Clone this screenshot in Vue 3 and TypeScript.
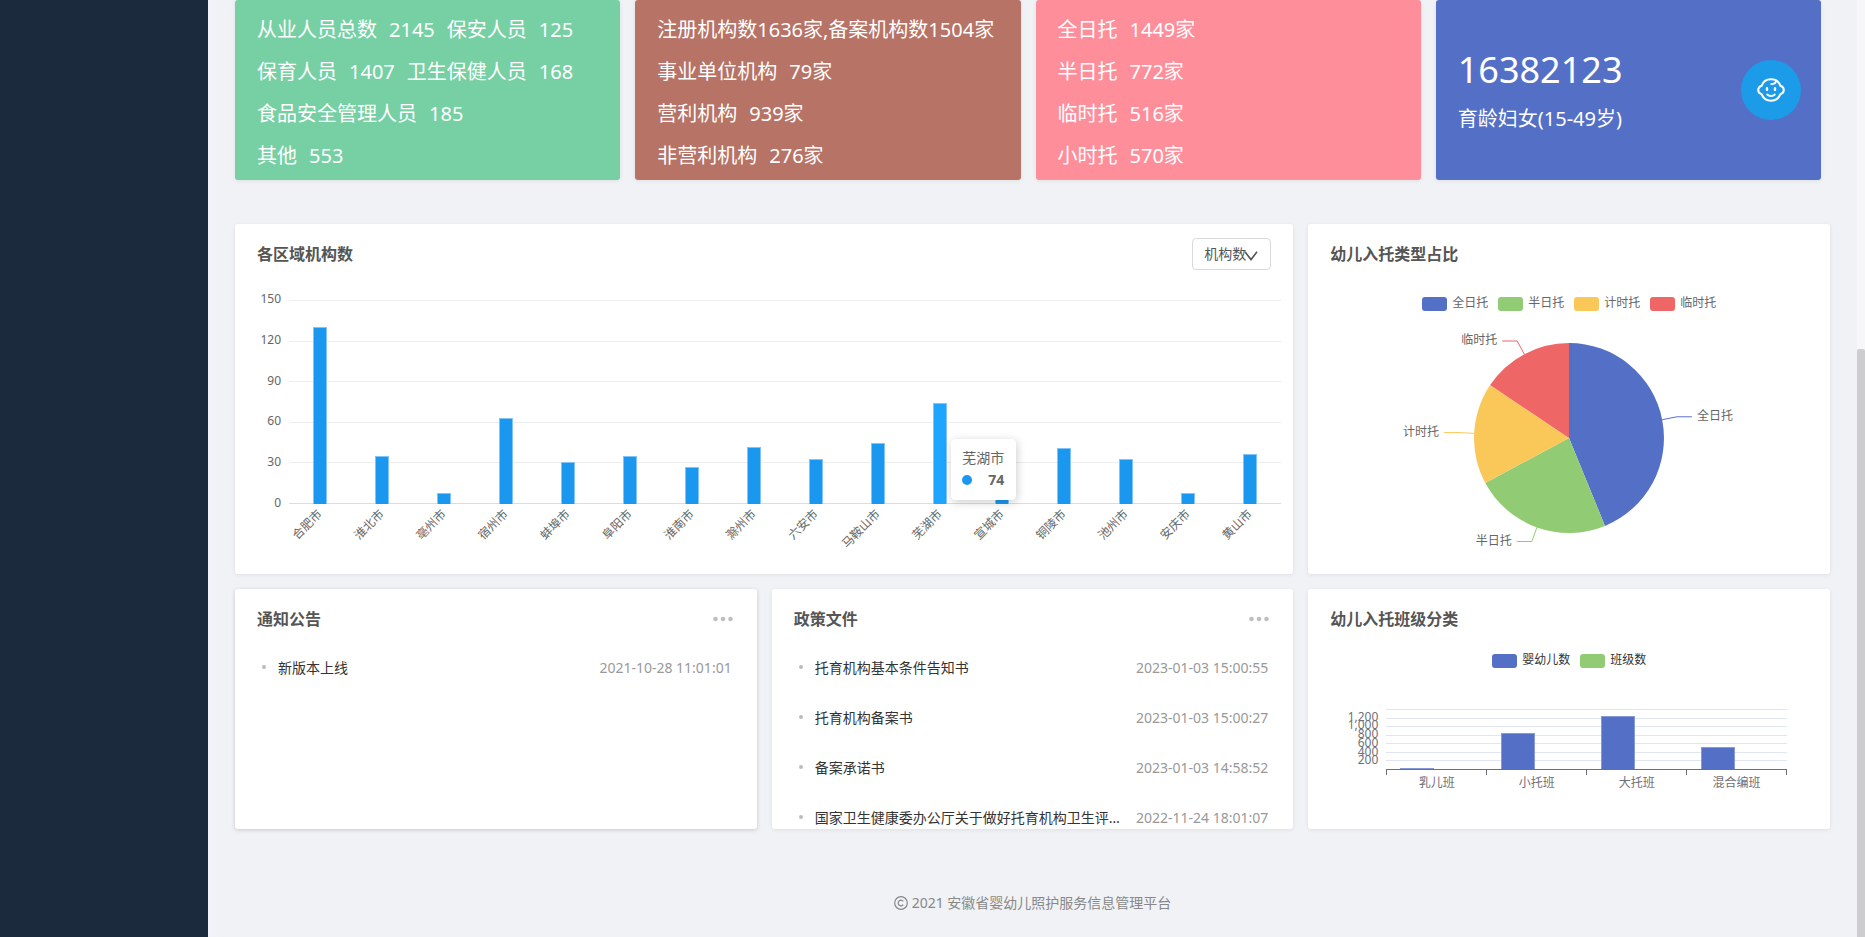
<script setup lang="ts">
import { ref } from 'vue'

interface Stat {
  label: string
  value: string
}

const staffRows: Stat[][] = [
  [
    { label: '从业人员总数', value: '2145' },
    { label: '保安人员', value: '125' },
  ],
  [
    { label: '保育人员', value: '1407' },
    { label: '卫生保健人员', value: '168' },
  ],
  [{ label: '食品安全管理人员', value: '185' }],
  [{ label: '其他', value: '553' }],
]

const orgHeadline = '注册机构数1636家,备案机构数1504家'
const orgRows: Stat[] = [
  { label: '事业单位机构', value: '79家' },
  { label: '营利机构', value: '939家' },
  { label: '非营利机构', value: '276家' },
]

const careRows: Stat[] = [
  { label: '全日托', value: '1449家' },
  { label: '半日托', value: '772家' },
  { label: '临时托', value: '516家' },
  { label: '小时托', value: '570家' },
]

/* Institutions per city */
const metric = ref('机构数')
const cityMax = 150
const cityTicks = [150, 120, 90, 60, 30, 0]
const cities = [
  { name: '合肥市', value: 130 },
  { name: '淮北市', value: 35 },
  { name: '亳州市', value: 8 },
  { name: '宿州市', value: 63 },
  { name: '蚌埠市', value: 31 },
  { name: '阜阳市', value: 35 },
  { name: '淮南市', value: 27 },
  { name: '滁州市', value: 42 },
  { name: '六安市', value: 33 },
  { name: '马鞍山市', value: 45 },
  { name: '芜湖市', value: 74 },
  { name: '宣城市', value: 25 },
  { name: '铜陵市', value: 41 },
  { name: '池州市', value: 33 },
  { name: '安庆市', value: 8 },
  { name: '黄山市', value: 37 },
]
const activeIndex = ref(10)

/* Enrolment types */
const cx = 200
const cy = 120
const radius = 95
const shares = [
  { name: '全日托', value: 1449, color: '#5470c6' },
  { name: '半日托', value: 772, color: '#91cc75' },
  { name: '计时托', value: 570, color: '#fac858' },
  { name: '临时托', value: 516, color: '#ee6666' },
]
const shareTotal = shares.reduce((sum, s) => sum + s.value, 0)

function polar(r: number, turn: number): [number, number] {
  const a = turn * Math.PI * 2
  return [Math.round((cx + r * Math.sin(a)) * 10) / 10, Math.round((cy - r * Math.cos(a)) * 10) / 10]
}

let sweep = 0
const slices = shares.map((s) => {
  const start = sweep / shareTotal
  sweep += s.value
  const end = sweep / shareTotal
  const mid = (start + end) / 2
  const side = mid < 0.5 ? 1 : -1
  const from = polar(radius, start)
  const to = polar(radius, end)
  const edge = polar(radius, mid)
  const bend = polar(radius + 15, mid)
  const tip = bend[0] + side * 15
  return {
    ...s,
    path: `M${cx} ${cy}L${from} A${radius} ${radius} 0 ${end - start > 0.5 ? 1 : 0} 1 ${to}Z`,
    line: `${edge} ${bend} ${tip},${bend[1]}`,
    textX: tip + side * 5,
    textY: bend[1] + 3,
    anchor: side > 0 ? 'start' : 'end',
  }
})

/* Children per class type */
const classMax = 1400
const classTicks = ['', '1,200', '1,000', '800', '600', '400', '200', '']
const classes = [
  { name: '乳儿班', value: 35 },
  { name: '小托班', value: 843 },
  { name: '大托班', value: 1236 },
  { name: '混合编班', value: 523 },
]

interface Notice {
  title: string
  time: string
}
const notices: Notice[] = [{ title: '新版本上线', time: '2021-10-28 11:01:01' }]
const policies: Notice[] = [
  { title: '托育机构基本条件告知书', time: '2023-01-03 15:00:55' },
  { title: '托育机构备案书', time: '2023-01-03 15:00:27' },
  { title: '备案承诺书', time: '2023-01-03 14:58:52' },
  { title: '国家卫生健康委办公厅关于做好托育机构卫生评价工作的通知', time: '2022-11-24 18:01:07' },
]
const boards = [
  { title: '通知公告', items: notices, raised: true },
  { title: '政策文件', items: policies, raised: false },
]
</script>

<template>
  <div class="layout">
    <aside class="sidebar"></aside>

    <main class="content">
      <section class="stats">
        <div class="stat green">
          <p v-for="(row, i) in staffRows" :key="i" class="stat-row">
            <template v-for="s in row" :key="s.label">
              <span>{{ s.label }}</span><span>{{ s.value }}</span>
            </template>
          </p>
        </div>
        <div class="stat brown">
          <p class="stat-row">{{ orgHeadline }}</p>
          <p v-for="s in orgRows" :key="s.label" class="stat-row">
            <span>{{ s.label }}</span><span>{{ s.value }}</span>
          </p>
        </div>
        <div class="stat pink">
          <p v-for="s in careRows" :key="s.label" class="stat-row">
            <span>{{ s.label }}</span><span>{{ s.value }}</span>
          </p>
        </div>
        <div class="stat blue">
          <div class="women">
            <p class="big">16382123</p>
            <p class="caption">育龄妇女(15-49岁)</p>
          </div>
          <span class="badge">
            <svg width="28" height="24" viewBox="0 0 28 24" fill="none" stroke="#fff" stroke-width="2" stroke-linecap="round" stroke-linejoin="round">
              <path d="M14 1.300C9.600 1.300 6 3.800 4.600 7.800C3 8.300 1.200 10.100 1.200 12S3 15.700 4.600 16.200C6 20 9.600 22.700 14 22.700S22 20 23.400 16.200C25 15.700 26.800 13.900 26.800 12S25 8.300 23.400 7.800C22 3.800 18.400 1.300 14 1.300Z" />
              <path d="M14.300 6C17 6 18.600 5 19 3.200" />
              <path d="M10 10.300v1.600M18 10.300v1.600" stroke-width="2.400" />
              <path d="M10.300 16.600C12 18.400 16 18.400 17.700 16.600" />
            </svg>
          </span>
        </div>
      </section>

      <section class="panels">
        <article class="card wide">
          <header class="card-head">
            <h2>各区域机构数</h2>
            <div class="picker">
              <select v-model="metric" aria-label="统计指标">
                <option>机构数</option>
              </select>
              <svg width="14" height="10" viewBox="0 0 14 10" fill="none" stroke="#555" stroke-width="1.600">
                <path d="M1 .8L7 8.600L13 .8" />
              </svg>
            </div>
          </header>

          <div class="city-chart">
            <div class="y-axis">
              <span v-for="t in cityTicks" :key="t">{{ t }}</span>
            </div>
            <div class="plot">
              <div class="grid-lines">
                <i v-for="t in cityTicks" :key="t" :class="{ base: t === 0 }"></i>
              </div>
              <div class="bars">
                <div v-for="(c, i) in cities" :key="c.name" class="slot">
                  <div class="bar" :class="{ active: i === activeIndex }" :style="{ height: (c.value / cityMax) * 100 + '%' }"></div>
                </div>
              </div>
              <div class="tooltip" :style="{ left: ((activeIndex + 0.5) / cities.length) * 100 + '%' }">
                <span>{{ cities[activeIndex].name }}</span>
                <span class="tip-row"><i></i><b>{{ cities[activeIndex].value }}</b></span>
              </div>
            </div>
            <div class="x-axis">
              <div v-for="c in cities" :key="c.name" class="x-slot"><span>{{ c.name }}</span></div>
            </div>
          </div>
        </article>

        <article class="card">
          <header class="card-head"><h2>幼儿入托类型占比</h2></header>
          <ul class="legend pie-legend">
            <li v-for="s in shares" :key="s.name">
              <svg width="25" height="14"><rect width="25" height="14" rx="3" :fill="s.color" /></svg>
              <span>{{ s.name }}</span>
            </li>
          </ul>
          <svg class="pie" width="400" height="240" viewBox="0 0 400 240">
            <g v-for="s in slices" :key="s.name">
              <path :d="s.path" :fill="s.color" />
              <polyline :points="s.line" fill="none" :stroke="s.color" />
              <text :x="s.textX" :y="s.textY" :text-anchor="s.anchor">{{ s.name }}</text>
            </g>
          </svg>
        </article>

        <article v-for="b in boards" :key="b.title" class="card short" :class="{ raised: b.raised }">
          <header class="card-head">
            <h2>{{ b.title }}</h2>
            <button type="button" class="more" aria-label="更多">
              <svg width="24" height="24" viewBox="0 0 24 24" fill="#bfbfbf">
                <circle cx="4.500" cy="12" r="2.300" /><circle cx="12" cy="12" r="2.300" /><circle cx="19.500" cy="12" r="2.300" />
              </svg>
            </button>
          </header>
          <ul class="news">
            <li v-for="n in b.items" :key="n.title">
              <i class="dot"></i>
              <a href="#">{{ n.title }}</a>
              <time>{{ n.time }}</time>
            </li>
          </ul>
        </article>

        <article class="card short">
          <header class="card-head"><h2>幼儿入托班级分类</h2></header>
          <ul class="legend class-legend">
            <li>
              <svg width="25" height="14"><rect width="25" height="14" rx="3" fill="#5470c6" /></svg>
              <span>婴幼儿数</span>
            </li>
            <li>
              <svg width="25" height="14"><rect width="25" height="14" rx="3" fill="#91cc75" /></svg>
              <span>班级数</span>
            </li>
          </ul>
          <div class="class-chart">
            <div class="y-axis">
              <span v-for="(t, i) in classTicks" :key="i">{{ t }}</span>
            </div>
            <div class="plot">
              <div class="grid-lines">
                <i v-for="(t, i) in classTicks" :key="i"></i>
              </div>
              <div class="bars">
                <div v-for="c in classes" :key="c.name" class="slot">
                  <div class="bar" :style="{ height: (c.value / classMax) * 100 + '%' }"></div>
                </div>
              </div>
            </div>
            <div class="x-axis">
              <div v-for="c in classes" :key="c.name" class="x-slot"><span>{{ c.name }}</span></div>
            </div>
          </div>
        </article>
      </section>

      <footer class="footer">
        <svg width="14" height="14" viewBox="0 0 14 14" fill="none" stroke="#888" stroke-width="1.200">
          <circle cx="7" cy="7" r="6.300" />
          <path d="M9.200 5.300A2.800 2.800 0 1 0 9.200 8.700" />
        </svg>
        <span>2021 安徽省婴幼儿照护服务信息管理平台</span>
      </footer>
    </main>

    <div class="scrollbar"><div class="thumb"></div></div>
  </div>
</template>

<style>
body {
  margin: 0;
  background: #f0f2f6;
}
</style>

<style scoped>
.layout {
  display: flex;
  min-height: 100vh;
  font-family: 'Noto Sans', 'Noto Sans CJK SC', sans-serif;
  font-size: 14px;
  color: #555;
}
h2,
p,
ul {
  margin: 0;
  padding: 0;
  list-style: none;
}
.sidebar {
  flex: 0 0 208px;
  background: #1b2a3c;
}
.content {
  flex: 1;
  min-width: 0;
  padding: 0 27px;
  box-shadow: inset 10px 0 8px -8px #f5f5fa;
}

.stats {
  display: grid;
  grid-template-columns: repeat(4, 1fr);
  gap: 15px;
  padding-right: 9px;
}
.stat {
  box-sizing: border-box;
  min-height: 180px;
  padding: 9px 22px 3px;
  border-radius: 3px;
  color: #fff;
  font-size: 20px;
  line-height: 42px;
  white-space: nowrap;
  box-shadow: 0 1px 4px rgba(0, 0, 0, 0.08);
}
.stat-row {
  display: flex;
  gap: 12px;
}
.green {
  background: #76d0a3;
}
.brown {
  background: #b77366;
}
.pink {
  background: #ff8e9b;
}
.blue {
  display: flex;
  align-items: center;
  justify-content: space-between;
  padding: 0 20px 0 22px;
  background: #5470c6;
}
.women {
  padding-top: 6px;
}
.big {
  font-size: 36px;
  line-height: 52px;
}
.caption {
  line-height: 46px;
}
.badge {
  display: flex;
  align-items: center;
  justify-content: center;
  width: 60px;
  height: 60px;
  border-radius: 50%;
  background: #1c9be9;
}

.panels {
  display: grid;
  grid-template-columns: repeat(3, 1fr);
  gap: 15px;
  margin-top: 44px;
}
.card {
  box-sizing: border-box;
  min-width: 0;
  height: 350px;
  border-radius: 3px;
  background: #fff;
  box-shadow: 0 1px 4px rgba(0, 0, 0, 0.08);
}
.wide {
  grid-column: span 2;
}
.short {
  height: 240px;
  overflow: hidden;
}
.raised {
  box-shadow: 0 1px 4px rgba(0, 0, 0, 0.18);
}
.card-head {
  display: flex;
  align-items: center;
  justify-content: space-between;
  height: 32px;
  padding: 14px 22px 0;
}
h2 {
  font-size: 16px;
  font-weight: 600;
  line-height: 24px;
}

.picker {
  position: relative;
}
.picker select {
  appearance: none;
  display: block;
  width: 79px;
  height: 32px;
  padding: 0 11px 2px;
  border: 1px solid #d9d9d9;
  border-radius: 4px;
  background: #fff;
  color: #555;
  font: inherit;
}
.picker svg {
  position: absolute;
  top: 13px;
  right: 13px;
  pointer-events: none;
}
.more {
  display: flex;
  padding: 0;
  border: 0;
  background: none;
}

.city-chart,
.class-chart {
  display: grid;
  font-size: 12px;
}
.city-chart {
  grid-template: 204px auto / 46px 1fr;
  column-gap: 8px;
  margin: 30px 12px 0 0;
  color: #666;
}
.plot {
  position: relative;
}
.y-axis {
  display: flex;
  flex-direction: column;
  justify-content: space-between;
  margin: -1px 0 1px;
  text-align: right;
}
.y-axis span {
  height: 0;
  line-height: 0;
}
.grid-lines {
  position: absolute;
  inset: 0;
  display: flex;
  flex-direction: column;
  justify-content: space-between;
}
.grid-lines i {
  height: 1px;
  background: #eee;
}
.grid-lines .base {
  background: #ddd;
}
.bars {
  position: relative;
  display: flex;
  height: 100%;
}
.slot {
  flex: 1;
  display: flex;
  align-items: flex-end;
  justify-content: center;
}
.bar {
  box-sizing: border-box;
  width: 14px;
  border: 1px solid #82c4f7;
  border-bottom: 0;
  background: #1a98f0;
}
.bar.active {
  background: #1ea5ff;
}
.x-axis {
  grid-column: 2;
  display: flex;
}
.x-slot {
  flex: 1;
}
.city-chart .x-slot span {
  display: flex;
  justify-content: flex-end;
  width: 50%;
  line-height: 16px;
  white-space: nowrap;
  transform: rotate(-45deg);
  transform-origin: right center;
}
.tooltip {
  position: absolute;
  top: 139px;
  box-sizing: border-box;
  display: flex;
  flex-direction: column;
  gap: 4px;
  margin-left: 11px;
  padding: 9px 11px 10px 10px;
  border: 1px solid #fff;
  border-radius: 4px;
  background: #fff;
  box-shadow: 1px 2px 10px rgba(0, 0, 0, 0.2);
  color: #666;
  font-size: 14px;
  line-height: 18px;
  white-space: nowrap;
}
.tip-row {
  display: flex;
  align-items: center;
  justify-content: space-between;
}
.tip-row i {
  width: 10px;
  height: 10px;
  border-radius: 50%;
  background: #1a98f0;
}

.legend {
  display: flex;
  justify-content: center;
  gap: 10px;
  font-size: 12px;
  line-height: 12px;
}
.legend li {
  display: flex;
  gap: 5px;
}
.pie-legend {
  margin-top: 27px;
  color: #666;
}
.pie {
  display: block;
  margin: 7px auto 0;
  font-size: 12px;
  fill: #666;
}

.news {
  margin-top: 7px;
}
.news li {
  display: flex;
  align-items: center;
  height: 50px;
  padding: 0 25px 0 27px;
}
.dot {
  flex: none;
  width: 4px;
  height: 4px;
  margin-right: 12px;
  border-radius: 50%;
  background: #bbb;
}
.news a {
  flex: 1;
  min-width: 0;
  margin-right: 8px;
  overflow: hidden;
  color: #333;
  text-decoration: none;
  text-overflow: ellipsis;
  white-space: nowrap;
}
.news time {
  width: 137px;
  color: #999;
  text-align: right;
}

.class-legend {
  margin-top: 19px;
  color: #333;
}
.class-chart {
  grid-template: 61px auto / 70px 1fr;
  column-gap: 8px;
  margin: 41px 43px 0 0;
  color: #6e7079;
}
.class-chart .grid-lines i {
  background: #e0e6f1;
}
.class-chart .slot {
  justify-content: flex-start;
}
.class-chart .bar {
  width: 34%;
  margin-left: 14%;
  border-color: #8799d6;
  background: #5470c6;
}
.class-chart .x-axis {
  margin-top: -1px;
  border-top: 1px solid #6e7079;
  border-right: 1px solid #6e7079;
  height: 5px;
  z-index: 1;
}
.class-chart .x-slot {
  border-left: 1px solid #6e7079;
  text-align: center;
  line-height: 26px;
}

.footer {
  display: flex;
  align-items: center;
  justify-content: center;
  gap: 4px;
  margin-top: 64px;
  color: #888;
  line-height: 20px;
}
.scrollbar {
  display: flex;
  align-items: flex-end;
  width: 8px;
  background: #f7f7f8;
}
.thumb {
  width: 100%;
  height: 588px;
  border-radius: 2px 2px 0 0;
  background: #cdcdcd;
}
</style>
